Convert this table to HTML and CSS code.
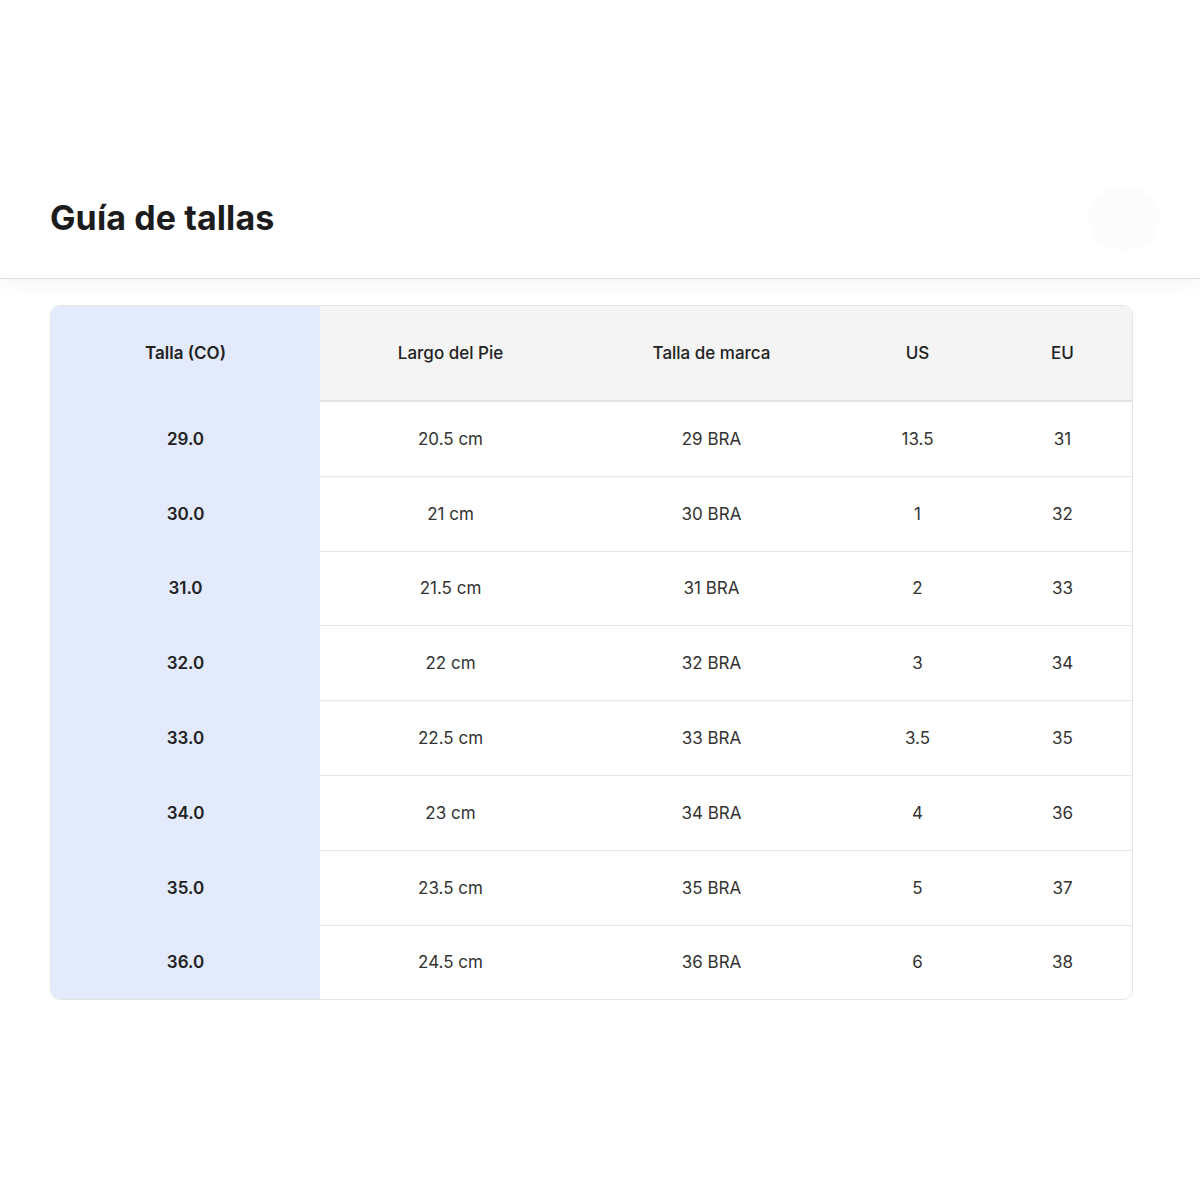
FILE: index.html
```html
<!DOCTYPE html>
<html lang="es">
<head>
<meta charset="utf-8">
<title>Guía de tallas</title>
<link rel="stylesheet" href="styles.css">
</head>
<body>
<header class="modal-header">
  <h1 class="title">Guía de tallas</h1>
  <span class="close" aria-hidden="true"></span>
</header>
<main class="content">
  <div class="table-wrap">
    <table class="sizes">
      <thead>
        <tr>
          <th class="key">Talla (CO)</th>
          <th>Largo del Pie</th>
          <th>Talla de marca</th>
          <th>US</th>
          <th>EU</th>
        </tr>
      </thead>
      <tbody>
        <tr><td class="key">29.0</td><td>20.5 cm</td><td>29 BRA</td><td>13.5</td><td>31</td></tr>
        <tr><td class="key">30.0</td><td>21 cm</td><td>30 BRA</td><td>1</td><td>32</td></tr>
        <tr><td class="key">31.0</td><td>21.5 cm</td><td>31 BRA</td><td>2</td><td>33</td></tr>
        <tr><td class="key">32.0</td><td>22 cm</td><td>32 BRA</td><td>3</td><td>34</td></tr>
        <tr><td class="key">33.0</td><td>22.5 cm</td><td>33 BRA</td><td>3.5</td><td>35</td></tr>
        <tr><td class="key">34.0</td><td>23 cm</td><td>34 BRA</td><td>4</td><td>36</td></tr>
        <tr><td class="key">35.0</td><td>23.5 cm</td><td>35 BRA</td><td>5</td><td>37</td></tr>
        <tr><td class="key">36.0</td><td>24.5 cm</td><td>36 BRA</td><td>6</td><td>38</td></tr>
      </tbody>
    </table>
  </div>
</main>
</body>
</html>
```
FILE: styles.css
```css
html, body {
  margin: 0;
  padding: 0;
  background: #ffffff;
  font-family: "Inter", "Lato", sans-serif;
  color: #222;
}

.modal-header {
  position: relative;
  height: 279px;
  box-sizing: border-box;
  padding: 197px 50px 0 50px;
  border-bottom: 1px solid #e0e0e0;
  box-shadow: 0 6px 20px rgba(0, 0, 0, 0.045);
  background: #fff;
  z-index: 1;
}

.title {
  margin: 0;
  font-size: 34px;
  font-weight: 700;
  line-height: 42px;
  color: #1c1c1c;
  letter-spacing: 0.1px;
}

.close {
  position: absolute;
  left: 1088px;
  top: 186px;
  width: 72px;
  height: 64px;
  border-radius: 50%;
  background: #fcfcfc;
}

.content {
  padding: 26px 67px 0 50px;
}

.table-wrap {
  border: 1px solid #e4e4e4;
  border-radius: 10px;
  overflow: hidden;
}

.sizes {
  width: 100%;
  border-collapse: collapse;
  table-layout: fixed;
  font-size: 17px;
}

.sizes th,
.sizes td {
  text-align: center;
  padding: 0;
}

.sizes th {
  height: 94px;
  background: #f4f4f4;
  font-weight: 500;
  color: #222;
  border-bottom: 2px solid #e4e4e4;
}

.sizes td {
  height: 73.8px;
  color: #333;
  border-bottom: 1px solid #e6e6e6;
}

.sizes tbody tr:last-child td {
  border-bottom: none;
}

.sizes th:nth-child(1) { width: 269px; }
.sizes th:nth-child(2) { width: 261px; }
.sizes th:nth-child(3) { width: 261px; }
.sizes th:nth-child(4) { width: 151px; }

.sizes .key {
  background: #e2eafb;
  border-bottom-color: #e2eafb;
  font-weight: 600;
  color: #222;
}
```
